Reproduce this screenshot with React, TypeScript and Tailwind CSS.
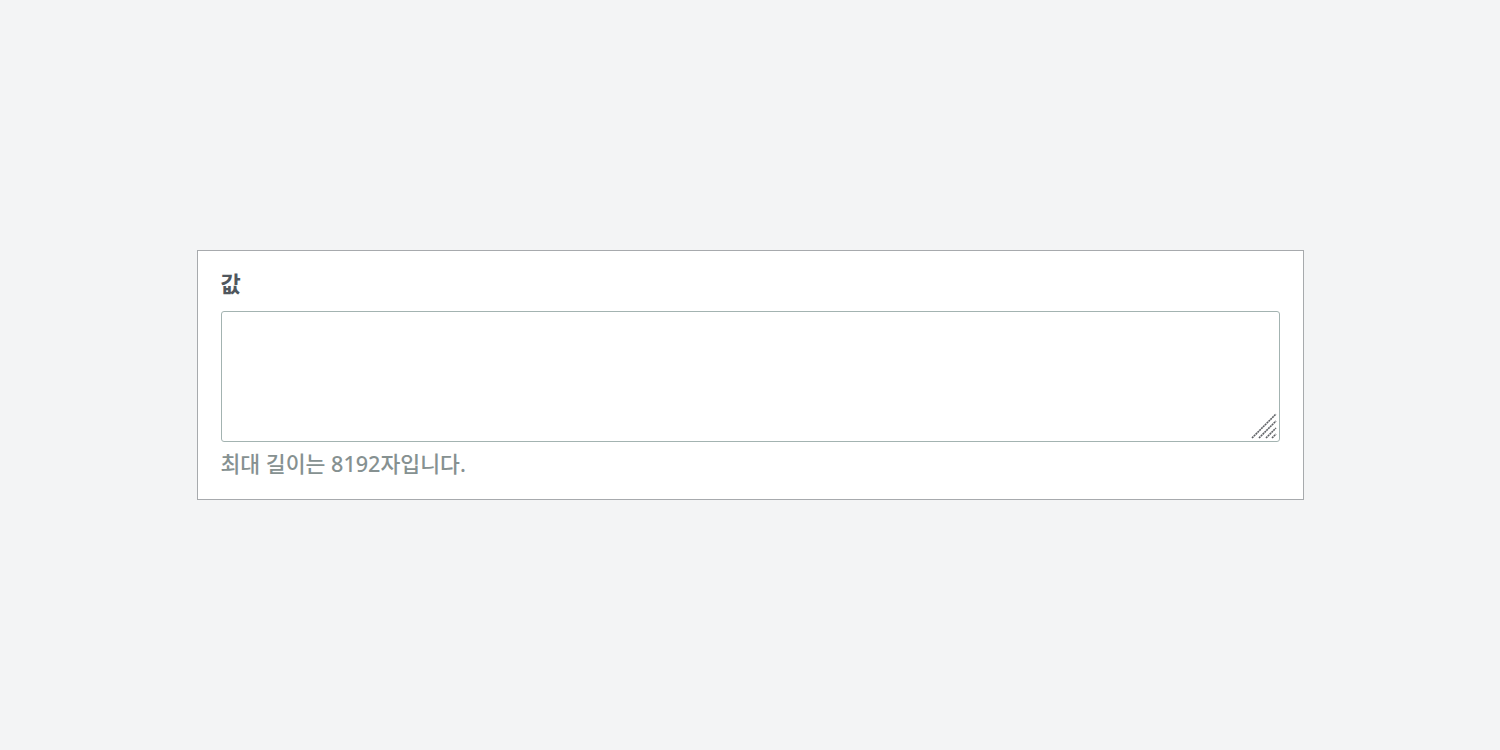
export default function App() {
  return (
    <div
      className="min-h-screen w-full bg-[#f3f4f5] flex items-center justify-center"
      style={{ fontFamily: '"Noto Sans", "Noto Sans CJK KR", sans-serif' }}
    >
      <div className="w-[1107px] h-[250px] bg-white border border-[#a7aaad] px-[23px] pt-[17px] box-border">
        <label className="block text-[22px] leading-[30px] font-bold text-[#50575e]">값</label>
        <div className="relative mt-[13px]">
          <textarea className="block w-full h-[131px] border border-[#a3b3b1] rounded-[3px] resize-none outline-none bg-white" />
          <svg className="absolute right-[3px] bottom-[3px] pointer-events-none" width="26" height="26" viewBox="0 0 26 26">
            <g stroke="#5f6266" strokeWidth="1.6" strokeDasharray="2 0.6">
              <line x1="1" y1="25" x2="25" y2="1" />
              <line x1="8" y1="25" x2="25" y2="8" />
              <line x1="15" y1="25" x2="25" y2="15" />
              <line x1="21" y1="25" x2="25" y2="21" />
            </g>
          </svg>
        </div>
        <p className="mt-[9px] text-[21.6px] leading-[26px] font-medium text-[#869191]">최대 길이는 8192자입니다.</p>
      </div>
    </div>
  );
}
